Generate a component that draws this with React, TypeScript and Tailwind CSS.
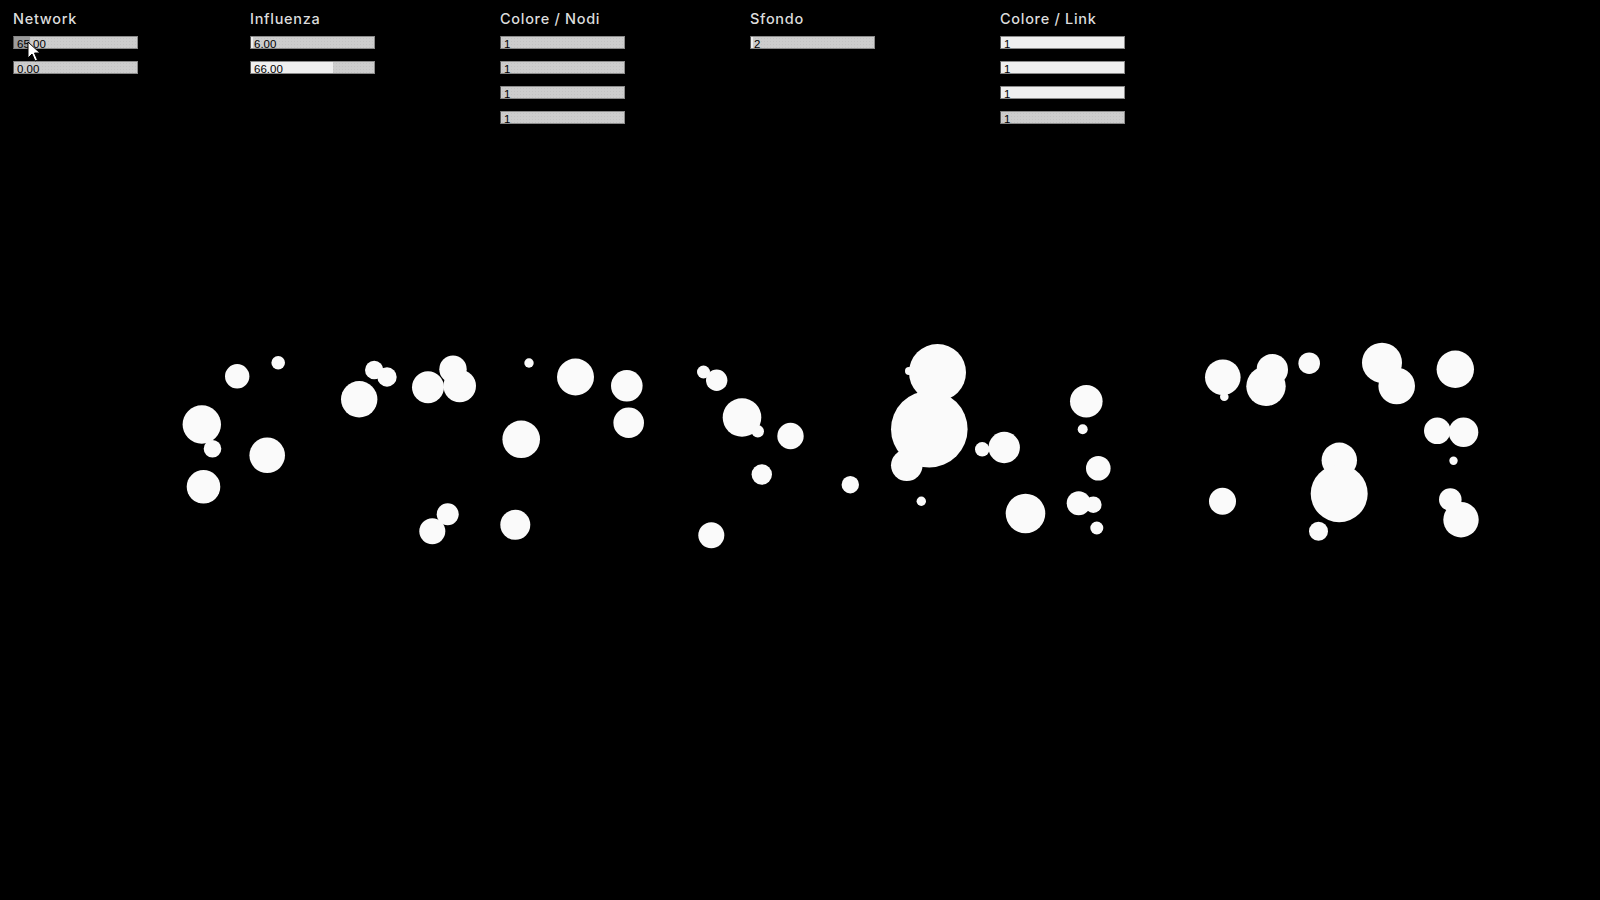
import React from 'react';

type Slider = { text: string; fill?: number; tone?: 'light' | 'dark' };
type Group = { label: string; width: string; sliders: Slider[] };

const groups: Group[] = [
  { label: 'Network', width: 'w-[237px]', sliders: [{ text: '65.00', fill: 16, tone: 'dark' }, { text: '0.00' }] },
  { label: 'Influenza', width: 'w-[250px]', sliders: [{ text: '6.00', fill: 2, tone: 'light' }, { text: '66.00', fill: 82, tone: 'light' }] },
  { label: 'Colore / Nodi', width: 'w-[250px]', sliders: [{ text: '1' }, { text: '1' }, { text: '1' }, { text: '1' }] },
  { label: 'Sfondo', width: 'w-[250px]', sliders: [{ text: '2', fill: 2, tone: 'light' }] },
  {
    label: 'Colore / Link',
    width: 'w-[250px]',
    sliders: [
      { text: '1', fill: 125, tone: 'light' },
      { text: '1', fill: 125, tone: 'light' },
      { text: '1', fill: 125, tone: 'light' },
      { text: '1' },
    ],
  },
];

// node positions read off the canvas: [cx, cy, r]
const nodes: [number, number, number][] = [
  [237.2, 376.3, 12.2], [278.2, 362.7, 6.8], [201.8, 424.5, 19.2], [212.5, 448.8, 8.8],
  [267.2, 455.3, 17.8], [203.5, 486.8, 16.8], [359.2, 399.3, 18.2], [374.2, 370, 9.2],
  [387, 377, 9.7], [428, 387.3, 16], [453, 369.3, 13.7], [459.7, 386, 16.3],
  [447.7, 514.2, 11], [432.3, 531.3, 13], [529, 363, 4.7], [575.5, 377, 18.5],
  [626.8, 385.8, 15.8], [628.7, 422.8, 15.3], [521.2, 439.3, 18.8], [515.3, 524.8, 15],
  [703.5, 372, 6.5], [716.7, 380.3, 10.7], [742, 417.5, 19.3], [757.8, 431.3, 6.2],
  [790.5, 436, 13.2], [761.8, 474.5, 10.2], [711.3, 535.2, 13], [937.5, 372.5, 28.5],
  [909, 371, 4], [929.3, 429.2, 38.3], [906.8, 465.3, 15.8], [850.3, 484.7, 8.7],
  [921.3, 501.2, 4.7], [982.2, 449.3, 7.2], [1004.2, 447.5, 15.7], [1025.5, 513.5, 19.8],
  [1086.3, 401.3, 16.3], [1082.7, 429.2, 5], [1098.3, 468.3, 12.3], [1078.7, 503.3, 12],
  [1093.3, 504.7, 8.3], [1096.8, 528, 6.5], [1222.8, 377.2, 17.8], [1224.3, 396.8, 4.3],
  [1272.3, 369.7, 15.7], [1266, 386.3, 19.7], [1309.2, 363.2, 10.8], [1382, 362.7, 20],
  [1396.7, 386, 18.3], [1455.3, 369.3, 18.7], [1437.3, 430.8, 13.3], [1463.5, 432.3, 14.8],
  [1453.5, 460.8, 4.2], [1339.3, 460.3, 17.7], [1339.2, 493.7, 28.5], [1318.5, 531.2, 9.5],
  [1222.5, 501.3, 13.5], [1450.3, 499.5, 11.3], [1461, 519.7, 17.7],
];

function SliderBox({ s }: { s: Slider }) {
  return (
    <div className="relative h-[13px] w-[125px] overflow-hidden border border-[#8a8a8a] border-l-[#555] bg-[#cdcdcd] bg-[radial-gradient(#c2c2c2_0.5px,transparent_0.7px)] bg-[length:3px_3px]">
      {s.fill ? (
        <div
          className={s.tone === 'dark' ? 'absolute inset-y-0 left-0 bg-[#9c9c9c]' : 'absolute inset-y-0 left-0 bg-[#efefef]'}
          style={{ width: s.fill }}
        />
      ) : null}
      <span className="relative block pl-[3px] pt-[1px] text-[11.5px] leading-[12px] text-black font-['Liberation_Sans',Arial,sans-serif]">
        {s.text}
      </span>
    </div>
  );
}

export default function App() {
  return (
    <div className="relative h-[900px] w-full overflow-hidden bg-black">
      <svg className="pointer-events-none absolute inset-0" width="1600" height="900" viewBox="0 0 1600 900">
        {nodes.map(([cx, cy, r], i) => (
          <circle key={i} cx={cx} cy={cy} r={r} fill="#fafafa" />
        ))}
      </svg>

      <div className="relative flex pl-[13px] pt-[10px]">
        {groups.map((g) => (
          <div key={g.label} className={`${g.width} flex flex-col`}>
            <div className="h-[26px] text-[14.5px] leading-[18px] font-medium tracking-[0.7px] text-[#dcdcdc] font-['Inter',sans-serif]">
              {g.label}
            </div>
            <div className="flex flex-col gap-[12px]">
              {g.sliders.map((s, i) => (
                <SliderBox key={i} s={s} />
              ))}
            </div>
          </div>
        ))}
      </div>

      {/* mouse pointer */}
      <svg className="pointer-events-none absolute left-[27px] top-[41px]" width="16" height="23" viewBox="0 0 16 23">
        <path d="M1 1 L1 17 L5 13 L8 20 L10.5 19 L7.5 12 L13 12 Z" fill="#fff" stroke="#000" strokeWidth="1" strokeLinejoin="round" />
      </svg>
    </div>
  );
}
